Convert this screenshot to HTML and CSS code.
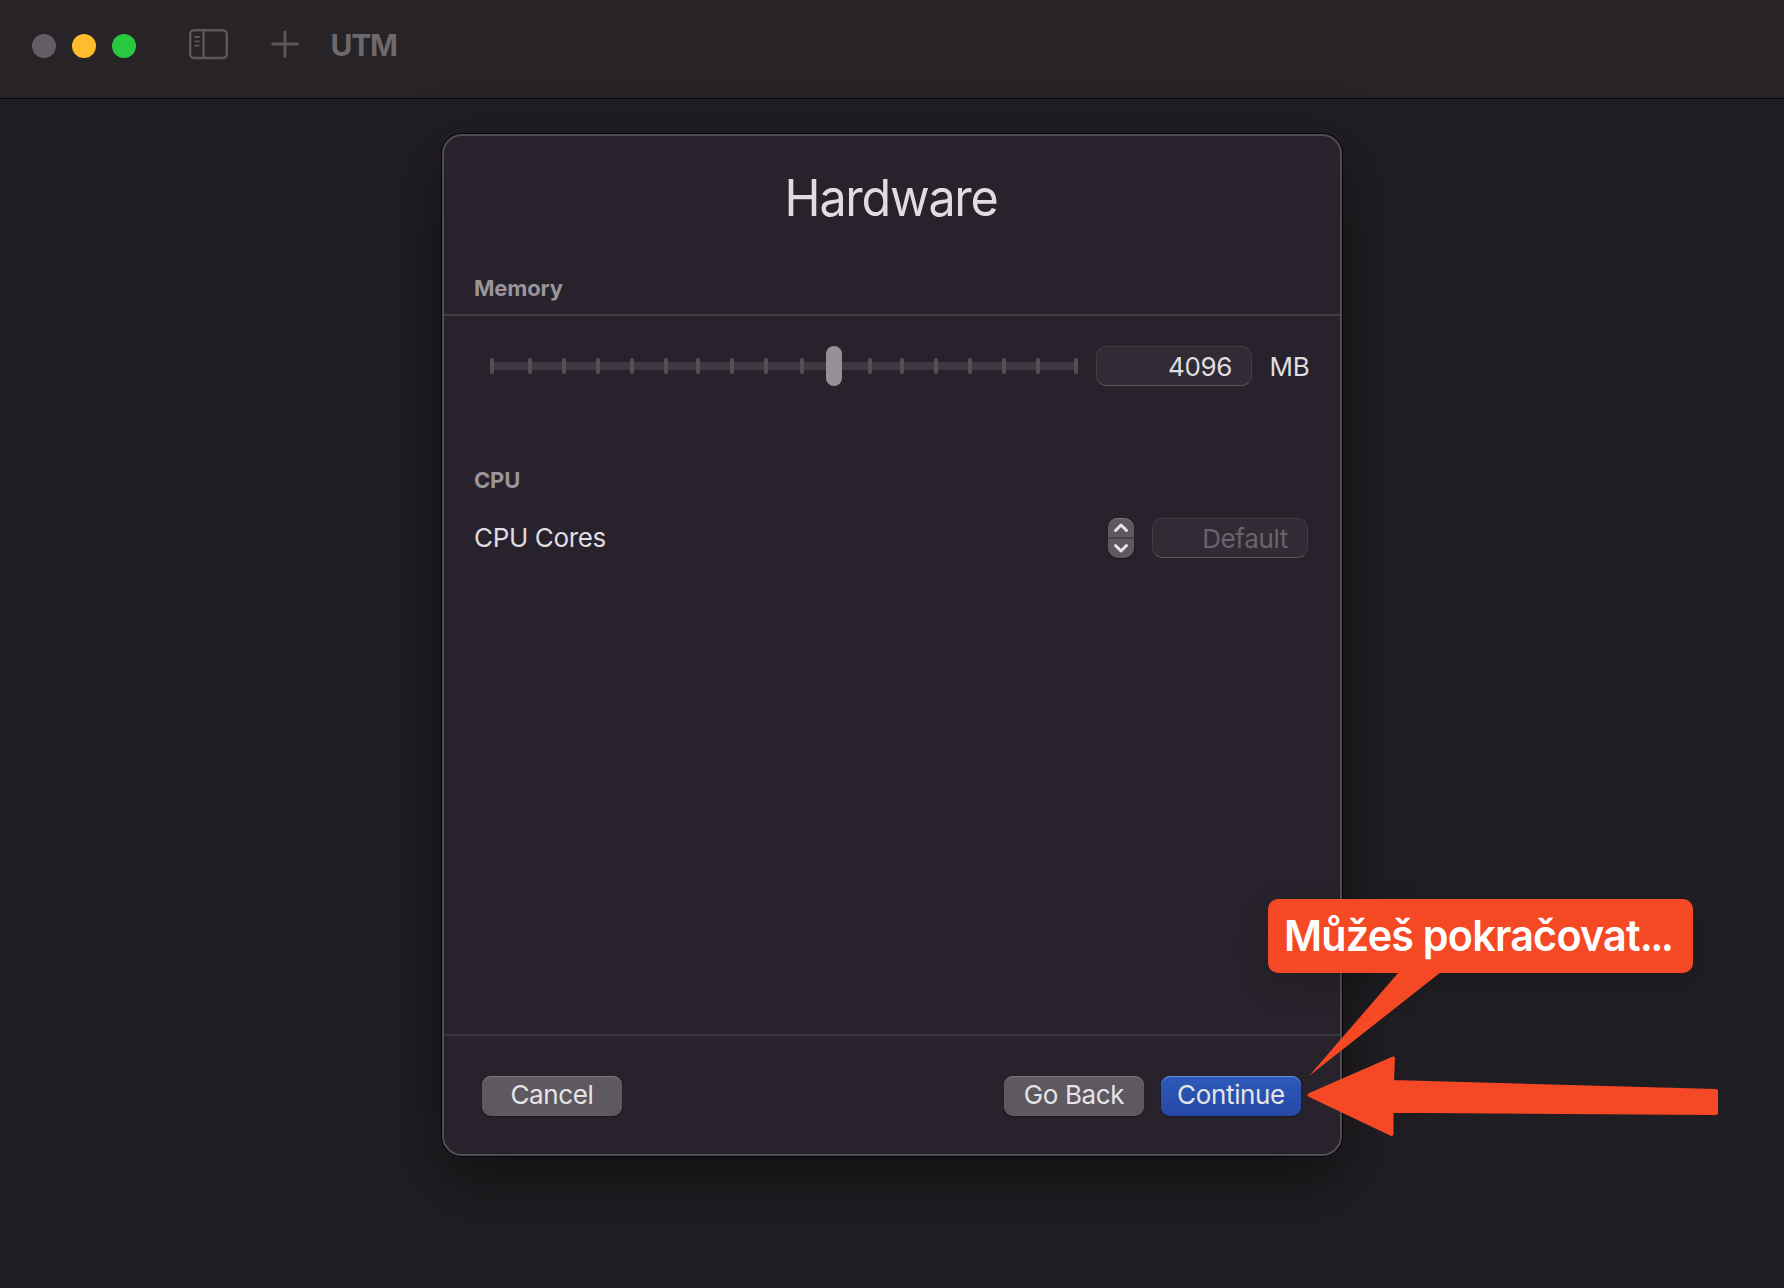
FILE: index.html
```html
<!DOCTYPE html>
<html lang="cs">
<head>
<meta charset="utf-8">
<title>UTM</title>
<link rel="stylesheet" href="styles.css">
</head>
<body>
<header class="titlebar">
  <div class="lights"><span class="light light-off"></span><span class="light light-min"></span><span class="light light-max"></span></div>
  <svg class="icon-sidebar" width="40" height="32" viewBox="0 0 40 32" fill="none" stroke="#5b575b" stroke-width="2.4" stroke-linecap="round"><rect x="2.200" y="2.200" width="36.600" height="27.800" rx="4"/><path d="M15.500 2v28"/><path d="M7 9h4M7 13.300h4M7 17.600h4" stroke-width="1.800"/></svg>
  <svg class="icon-plus" width="28" height="28" viewBox="0 0 28 28" stroke="#5b575b" stroke-width="2.800" stroke-linecap="round"><path d="M14 1.800v24.600M1.700 14h24.800"/></svg>
  <h1 class="app-name">UTM</h1>
</header>
<main class="workspace">
  <section class="dialog">
    <h2 class="dialog-title"><span>Hardware</span></h2>
    <h3 class="section-label memory-label">Memory</h3>
    <div class="memory-row">
      <div class="slider">
        <svg width="588" height="40" viewBox="0 0 588 40"><rect x="3" y="16" width="582" height="8" fill="#3e3842"/><path d="M2 14v12M40 14v12M74 14v12M108 14v12M142 14v12M176 14v12M208 14v12M242 14v12M276 14v12M312 14v12M380 14v12M412 14v12M446 14v12M480 14v12M514 14v12M548 14v12M586 14v12" stroke="#544e57" stroke-width="4" stroke-linecap="round"/></svg>
        <span class="knob"></span>
      </div>
      <div class="field">4096</div>
      <div class="unit">MB</div>
    </div>
    <h3 class="section-label cpu-label">CPU</h3>
    <div class="cpu-row">
      <div class="row-name">CPU Cores</div>
      <div class="stepper"><svg width="26" height="40" viewBox="0 0 26 40" fill="none" stroke="#e6e4e7" stroke-width="3" stroke-linecap="round" stroke-linejoin="round"><path d="M0 20h26" stroke="#48434b" stroke-width="2" stroke-linecap="butt"/><path d="M7.500 12.500l5.500-5.500 5.500 5.500M7.500 27.500l5.500 5.500 5.500-5.500"/></svg></div>
      <div class="field placeholder">Default</div>
    </div>
    <footer class="actions">
      <button class="btn cancel">Cancel</button>
      <button class="btn back">Go Back</button>
      <button class="btn primary">Continue</button>
    </footer>
  </section>
</main>
<div class="callout"><span class="callout-text">Můžeš pokračovat<span class="dots">...</span></span></div>
<svg class="pointers" width="420" height="172" viewBox="0 0 420 172" fill="#f54824"><path d="M99 0h42L9 104z"/><path stroke="#f54824" stroke-width="4" stroke-linejoin="round" d="M9.500 123L93 86.500l-1 23.500 324 9v22l-324.500-2.200v23.200z"/></svg>
</body>
</html>
```
FILE: styles.css
```css
* { box-sizing: border-box; }
body { margin: 0; width: 1784px; height: 1288px; overflow: hidden; position: relative; background: #201e22; font-family: Inter, "Liberation Sans", sans-serif; font-size: 26px; line-height: 32px; font-weight: 430; letter-spacing: -0.35px; color: #dfdde0; }
h1, h2, h3 { margin: 0; }
.titlebar { height: 99px; display: flex; align-items: flex-start; padding: 28px 32px 0; background: #272326; border-bottom: 1px solid #050506; }
.lights { display: flex; gap: 16px; padding-top: 6px; }
.light { width: 24px; height: 24px; border-radius: 50%; }
.light-off { background: #635e65; }
.light-min { background: #ffbd2e; }
.light-max { background: #28c840; }
.icon-sidebar { margin-left: 52px; }
.icon-plus { margin: 1.5px 0 0 43.4px; }
.app-name { margin-left: 31px; font-size: 30px; line-height: 35px; font-weight: 700; letter-spacing: -1.2px; color: #6c696c; }
.workspace { height: 1189px; padding-top: 35px; display: flex; justify-content: center; align-items: flex-start; }
.dialog { width: 900px; height: 1022px; border: 2px solid #514c54; border-radius: 20px; background: #28222c; box-shadow: 0 0 0 1px #050506, 0 24px 64px rgba(0,0,0,.5); display: flex; flex-direction: column; }
.dialog-title { padding: 30px 2px 0 0; font-size: 51px; line-height: 64px; font-weight: 400; text-align: center; letter-spacing: -1.3px; }
.dialog-title span { display: inline-block; transform: scaleX(.95); }
.section-label { font-size: 22px; line-height: 28px; font-weight: 700; letter-spacing: -0.15px; color: #9a959b; padding-left: 30px; }
.memory-label { margin-top: 44px; height: 42px; border-bottom: 2px solid #413b44; }
.memory-row { height: 40px; margin-top: 30px; padding-left: 46px; display: flex; align-items: center; }
.slider { flex: none; width: 588px; height: 40px; position: relative; }
.slider svg { display: block; }
.knob { position: absolute; left: 336px; top: 0; width: 16px; height: 40px; border-radius: 8px; background: #949096; }
.field { flex: none; width: 156px; height: 40px; margin-left: 18px; border-radius: 10px; border: 1px solid #423c45; border-bottom-color: #5b565e; background: #322b36; padding: 4px 19px 0; line-height: 32px; text-align: right; }
.placeholder { color: #69646c; }
.unit { margin-left: 17.5px; padding-top: 1px; }
.cpu-label { margin-top: 80px; }
.cpu-row { height: 40px; margin-top: 24px; padding: 0 32px 0 30px; display: flex; align-items: center; }
.row-name { flex: 1; }
.stepper { width: 26px; height: 40px; border-radius: 10px; background: #5e5960; box-shadow: 0 1px 2px rgba(0,0,0,.4), inset 0 1px #777279; }
.stepper svg { display: block; }
.actions { margin-top: auto; height: 120px; border-top: 2px solid #3c3640; padding: 40px 39px 0 38px; display: flex; align-items: flex-start; }
.btn { width: 140px; height: 40px; border: 0; border-radius: 9px; background: #5e5960; color: #e6e4e7; padding: 0 0 2px; font: inherit; letter-spacing: inherit; box-shadow: 0 1px 2px rgba(0,0,0,.4), inset 0 1px #7b767d; }
.back { margin-left: auto; }
.primary { margin-left: 17px; background: linear-gradient(#2d5abb, #2549a5); box-shadow: 0 1px 2px rgba(0,0,0,.4), inset 0 1px #6c8fd1; }
.callout { position: absolute; left: 1268px; top: 899px; width: 425px; height: 74px; border-radius: 10px; background: #f54824; color: #fff; font-size: 43px; font-weight: 600; line-height: 72px; letter-spacing: -0.8px; padding-left: 16px; white-space: nowrap; box-shadow: 0 12px 32px rgba(0,0,0,.16); }
.callout-text { display: inline-block; transform: scaleX(.96); transform-origin: left; }
.dots { letter-spacing: -2.8px; }
.pointers { position: absolute; left: 1300px; top: 972px; }
```
